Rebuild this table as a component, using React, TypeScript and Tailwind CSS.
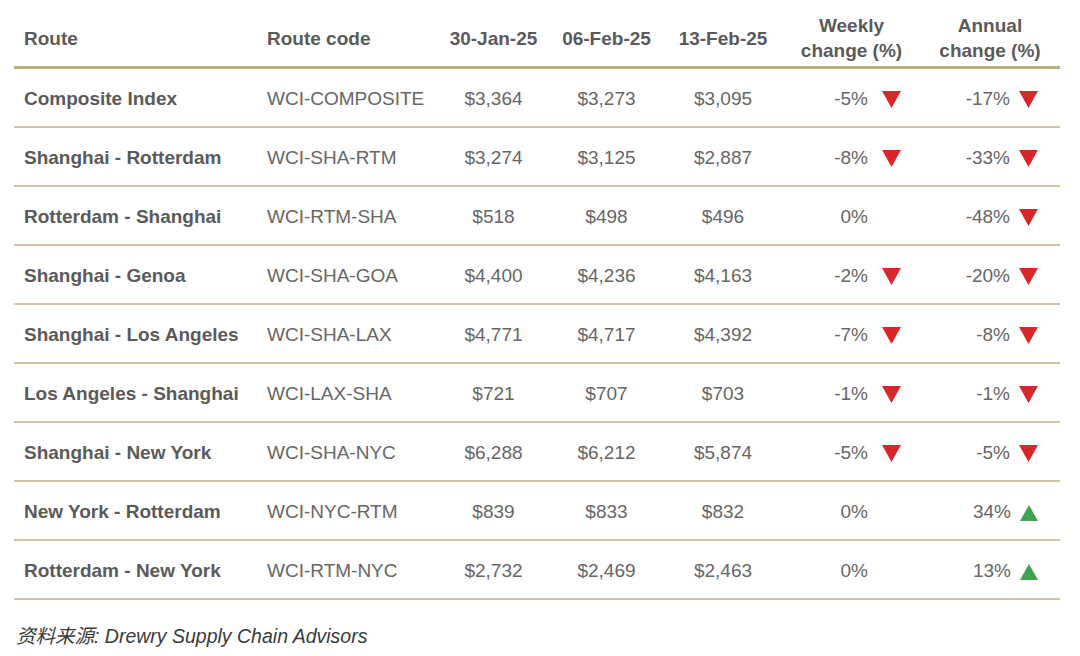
const rows = [
  { route: "Composite Index", code: "WCI-COMPOSITE", d1: "$3,364", d2: "$3,273", d3: "$3,095", weekly: "-5%", wDir: "down", annual: "-17%", aDir: "down" },
  { route: "Shanghai - Rotterdam", code: "WCI-SHA-RTM", d1: "$3,274", d2: "$3,125", d3: "$2,887", weekly: "-8%", wDir: "down", annual: "-33%", aDir: "down" },
  { route: "Rotterdam - Shanghai", code: "WCI-RTM-SHA", d1: "$518", d2: "$498", d3: "$496", weekly: "0%", wDir: "none", annual: "-48%", aDir: "down" },
  { route: "Shanghai - Genoa", code: "WCI-SHA-GOA", d1: "$4,400", d2: "$4,236", d3: "$4,163", weekly: "-2%", wDir: "down", annual: "-20%", aDir: "down" },
  { route: "Shanghai - Los Angeles", code: "WCI-SHA-LAX", d1: "$4,771", d2: "$4,717", d3: "$4,392", weekly: "-7%", wDir: "down", annual: "-8%", aDir: "down" },
  { route: "Los Angeles - Shanghai", code: "WCI-LAX-SHA", d1: "$721", d2: "$707", d3: "$703", weekly: "-1%", wDir: "down", annual: "-1%", aDir: "down" },
  { route: "Shanghai - New York", code: "WCI-SHA-NYC", d1: "$6,288", d2: "$6,212", d3: "$5,874", weekly: "-5%", wDir: "down", annual: "-5%", aDir: "down" },
  { route: "New York - Rotterdam", code: "WCI-NYC-RTM", d1: "$839", d2: "$833", d3: "$832", weekly: "0%", wDir: "none", annual: "34%", aDir: "up" },
  { route: "Rotterdam - New York", code: "WCI-RTM-NYC", d1: "$2,732", d2: "$2,469", d3: "$2,463", weekly: "0%", wDir: "none", annual: "13%", aDir: "up" },
];

function Arrow({ dir }: { dir: string }) {
  if (dir === "down") {
    return (
      <svg className="h-[17px] w-[19px] shrink-0" viewBox="0 0 19 17">
        <polygon points="0,0 19,0 9.5,17" fill="#d9262a" />
      </svg>
    );
  }
  if (dir === "up") {
    return (
      <svg className="h-[16px] w-[18px] shrink-0" viewBox="0 0 18 16">
        <polygon points="9,0 18,16 0,16" fill="#3da34e" />
      </svg>
    );
  }
  return <span className="w-[19px] shrink-0" />;
}

const grid = "grid grid-cols-[243px_180px_113px_113px_120px_137px_140px] items-center";

export default function App() {
  return (
    <div
      className="h-[656px] w-[1080px] bg-white text-[19px]"
      style={{ fontFamily: '"Liberation Sans", Arial, "Noto Sans CJK SC", sans-serif' }}
    >
      <div className="ml-[14px] w-[1046px]">
        <div className={`${grid} h-[69px] border-b-[3px] border-[#b8ae7c] pt-[10px] font-bold leading-[25px] text-[#5a5a5a]`}>
          <div className="pl-[10px]">Route</div>
          <div className="pl-[10px]">Route code</div>
          <div className="text-center">30-Jan-25</div>
          <div className="text-center">06-Feb-25</div>
          <div className="text-center">13-Feb-25</div>
          <div className="text-center">
            Weekly
            <br />
            change (%)
          </div>
          <div className="text-center">
            Annual
            <br />
            change (%)
          </div>
        </div>
        {rows.map((r) => (
          <div
            key={r.code}
            className={`${grid} h-[59px] border-b-2 border-[#cfc6a2] pt-[4px] text-[#666666]`}
          >
            <div className="pl-[10px] font-bold text-[#5a5a5a]">{r.route}</div>
            <div className="pl-[10px]">{r.code}</div>
            <div className="text-center">{r.d1}</div>
            <div className="text-center">{r.d2}</div>
            <div className="text-center">{r.d3}</div>
            <div className="flex items-center justify-end gap-[14px] pr-[19px]">
              <span>{r.weekly}</span>
              <Arrow dir={r.wDir} />
            </div>
            <div className="flex items-center justify-end gap-[9px] pr-[22px]">
              <span>{r.annual}</span>
              <Arrow dir={r.aDir} />
            </div>
          </div>
        ))}
        <div className="mt-[22px] pl-[2px] text-[19.5px] italic text-[#3a3a3a]">
          资料来源: Drewry Supply Chain Advisors
        </div>
      </div>
    </div>
  );
}
